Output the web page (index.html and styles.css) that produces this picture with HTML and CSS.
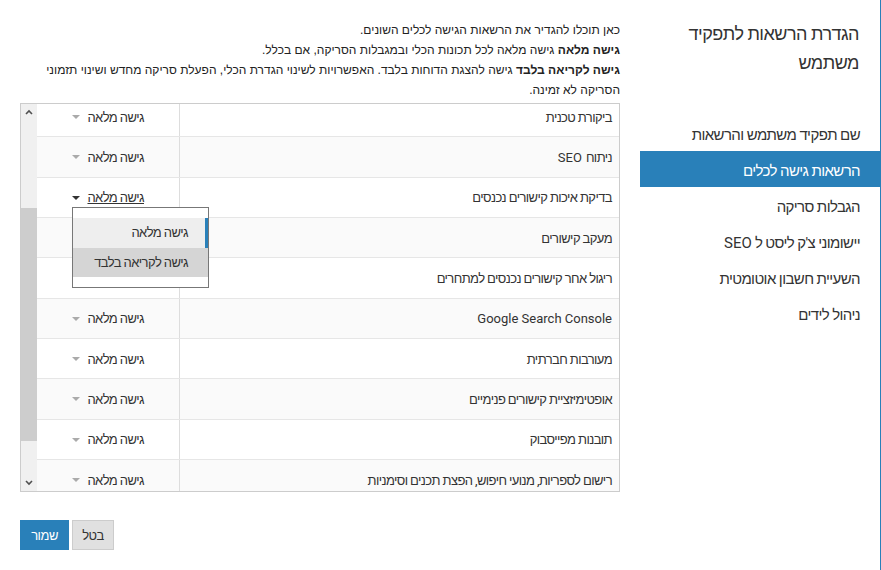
FILE: index.html
```
<!DOCTYPE html>
<html lang="he" dir="rtl">
<head>
    <meta charset="UTF-8">
    <meta name="viewport" content="width=device-width, initial-scale=1.0">
    <title>הרשאות גישה לכלים</title>
    <link rel="stylesheet" href="styles.css">
</head>
<body>
    <div class="layout">
        <aside class="sidebar">
            <h2 class="sidebar-title">הגדרת הרשאות לתפקיד משתמש</h2>
            <ul class="menu">
                <li>שם תפקיד משתמש והרשאות</li>
                <li class="active">הרשאות גישה לכלים</li>
                <li>הגבלות סריקה</li>
                <li>יישומוני צ'ק ליסט ל <span class="latin">SEO</span></li>
                <li>השעיית חשבון אוטומטית</li>
                <li>ניהול לידים</li>
            </ul>
        </aside>

        <main class="content">
            <div class="intro">
                <div>כאן תוכלו להגדיר את הרשאות הגישה לכלים השונים.</div>
                <div><b>גישה מלאה</b> גישה מלאה לכל תכונות הכלי ובמגבלות הסריקה, אם בכלל.</div>
                <div><b>גישה לקריאה בלבד</b> גישה להצגת הדוחות בלבד. האפשרויות לשינוי הגדרת הכלי, הפעלת סריקה מחדש ושינוי תזמוני הסריקה לא זמינה.</div>
            </div>

            <div class="tools-table">
                <div class="rows-viewport">
                    <div class="rows">
                        <div class="row">
                            <div class="tool-name">ביקורת טכנית</div>
                            <div class="tool-access"><div class="select"><span>גישה מלאה</span><i class="caret"></i></div></div>
                        </div>
                        <div class="row">
                            <div class="tool-name">ניתוח <span class="latin">SEO</span></div>
                            <div class="tool-access"><div class="select"><span>גישה מלאה</span><i class="caret"></i></div></div>
                        </div>
                        <div class="row">
                            <div class="tool-name">בדיקת איכות קישורים נכנסים</div>
                            <div class="tool-access">
                                <div class="select open"><span>גישה מלאה</span><i class="caret"></i>
                                    <ul class="dropdown">
                                        <li class="selected">גישה מלאה</li>
                                        <li class="hover">גישה לקריאה בלבד</li>
                                    </ul>
                                </div>
                            </div>
                        </div>
                        <div class="row">
                            <div class="tool-name">מעקב קישורים</div>
                            <div class="tool-access"><div class="select"><span>גישה מלאה</span><i class="caret"></i></div></div>
                        </div>
                        <div class="row">
                            <div class="tool-name">ריגול אחר קישורים נכנסים למתחרים</div>
                            <div class="tool-access"><div class="select"><span>גישה מלאה</span><i class="caret"></i></div></div>
                        </div>
                        <div class="row">
                            <div class="tool-name latin">Google Search Console</div>
                            <div class="tool-access"><div class="select"><span>גישה מלאה</span><i class="caret"></i></div></div>
                        </div>
                        <div class="row">
                            <div class="tool-name">מעורבות חברתית</div>
                            <div class="tool-access"><div class="select"><span>גישה מלאה</span><i class="caret"></i></div></div>
                        </div>
                        <div class="row">
                            <div class="tool-name">אופטימיזציית קישורים פנימיים</div>
                            <div class="tool-access"><div class="select"><span>גישה מלאה</span><i class="caret"></i></div></div>
                        </div>
                        <div class="row">
                            <div class="tool-name">תובנות מפייסבוק</div>
                            <div class="tool-access"><div class="select"><span>גישה מלאה</span><i class="caret"></i></div></div>
                        </div>
                        <div class="row">
                            <div class="tool-name">רישום לספריות, מנועי חיפוש, הפצת תכנים וסימניות</div>
                            <div class="tool-access"><div class="select"><span>גישה מלאה</span><i class="caret"></i></div></div>
                        </div>
                        <div class="row">
                            <div class="tool-name">ניטור מיקומים</div>
                            <div class="tool-access"><div class="select"><span>גישה מלאה</span><i class="caret"></i></div></div>
                        </div>
                    </div>
                </div>
                <div class="scrollbar">
                    <div class="scroll-btn">
                        <svg width="8" height="6" viewBox="0 0 8 6"><polyline points="1,5 4,2 7,5" fill="none" stroke="#505050" stroke-width="1.6"/></svg>
                    </div>
                    <div class="scroll-track">
                        <div class="scroll-thumb"></div>
                    </div>
                    <div class="scroll-btn">
                        <svg width="8" height="6" viewBox="0 0 8 6"><polyline points="1,1 4,4 7,1" fill="none" stroke="#505050" stroke-width="1.6"/></svg>
                    </div>
                </div>
            </div>

            <div class="actions">
                <button class="btn btn-cancel">בטל</button>
                <button class="btn btn-save">שמור</button>
            </div>
        </main>
    </div>
</body>
</html>
```

FILE: styles.css
```
html, body {
    margin: 0;
    height: 100%;
    overflow: hidden;
}
body {
    background-color: #fff;
    color: #333;
    font-family: Roboto, "Liberation Sans", Arial, sans-serif;
    font-size: 13px;
    letter-spacing: -0.6px;
}
.latin {
    letter-spacing: normal;
}
.layout {
    display: flex;
    height: 100vh;
}
.sidebar {
    width: 240px;
    flex-shrink: 0;
    border-right: 1px solid #2980b9;
}
.sidebar-title {
    margin: 0;
    padding: 19px 21px 0 20px;
    font-size: 18px;
    font-weight: 500;
    line-height: 29px;
    letter-spacing: -0.5px;
    color: #333;
}
.menu {
    list-style: none;
    margin: 38px 0 0 0;
    padding: 0;
}
.menu li {
    height: 36px;
    box-sizing: border-box;
    padding: 4px 20px 0 0;
    line-height: 32px;
    font-size: 15px;
    color: #333;
}
.menu li.active {
    background-color: #2980b9;
    color: #fff;
}
.content {
    flex: 1;
    min-width: 0;
    padding: 0 20px;
}
.intro {
    padding-top: 20px;
    line-height: 20px;
    font-family: "Liberation Sans", Arial, sans-serif;
    font-size: 12px;
    letter-spacing: 0;
    color: #222;
}
.intro b {
    font-weight: bold;
}
.tools-table {
    margin-top: 3px;
    height: 389px;
    box-sizing: border-box;
    border: 1px solid #ccc;
    display: flex;
}
.rows-viewport {
    flex: 1;
    overflow: hidden;
}
.rows {
    margin-top: -7px;
}
.row {
    display: flex;
    height: 40.33px;
    box-sizing: border-box;
    border-bottom: 1px solid #e6e6e6;
    background-color: #fff;
}
.row:nth-child(even) {
    background-color: #fafafa;
}
.tool-name {
    flex: 1;
    display: flex;
    align-items: center;
    gap: 4px;
    padding: 1px 7px 0 7px;
    border-left: 1px solid #ddd;
}
.tool-access {
    width: 107px;
    padding: 1px 35px 0 0;
    display: flex;
    align-items: center;
}
.select {
    position: relative;
    width: 72px;
    height: 18px;
    display: flex;
    align-items: center;
    justify-content: space-between;
    color: #333;
}
.caret {
    width: 0;
    height: 0;
    border-left: 4px solid transparent;
    border-right: 4px solid transparent;
    border-top: 4px solid #aaa;
}
.select.open span {
    text-decoration: underline;
}
.select.open .caret {
    border-top-color: #333;
}
.dropdown {
    position: absolute;
    top: 100%;
    left: 0;
    width: 137px;
    box-sizing: border-box;
    margin: 0;
    padding: 10px 0;
    list-style: none;
    background-color: #fff;
    border: 1px solid #777;
    z-index: 5;
}
.dropdown li {
    height: 29px;
    line-height: 29px;
    padding-right: 20px;
}
.dropdown li.selected {
    height: 30px;
    line-height: 30px;
    background-color: #eee;
    border-right: 3px solid #2980b9;
    padding-right: 17px;
}
.dropdown li.hover {
    background-color: #d5d5d5;
}
.scrollbar {
    width: 16px;
    background-color: #f0f0f0;
    display: flex;
    flex-direction: column;
}
.scroll-btn {
    height: 16px;
    display: flex;
    align-items: center;
    justify-content: center;
}
.scroll-track {
    flex: 1;
    padding-top: 88px;
}
.scroll-thumb {
    height: 233px;
    background-color: #cdcdcd;
}
.actions {
    margin-top: 28px;
    display: flex;
    justify-content: flex-end;
    gap: 3px;
}
.btn {
    height: 30px;
    padding: 0;
    font-family: Roboto, "Liberation Sans", Arial, sans-serif;
    font-size: 13px;
    letter-spacing: -0.5px;
    border: 1px solid #ccc;
    cursor: pointer;
}
.btn-cancel {
    width: 42px;
    background-color: #e0e0e0;
    color: #333;
}
.btn-save {
    width: 49px;
    background-color: #2980b9;
    border-color: #2980b9;
    color: #fff;
}
```
